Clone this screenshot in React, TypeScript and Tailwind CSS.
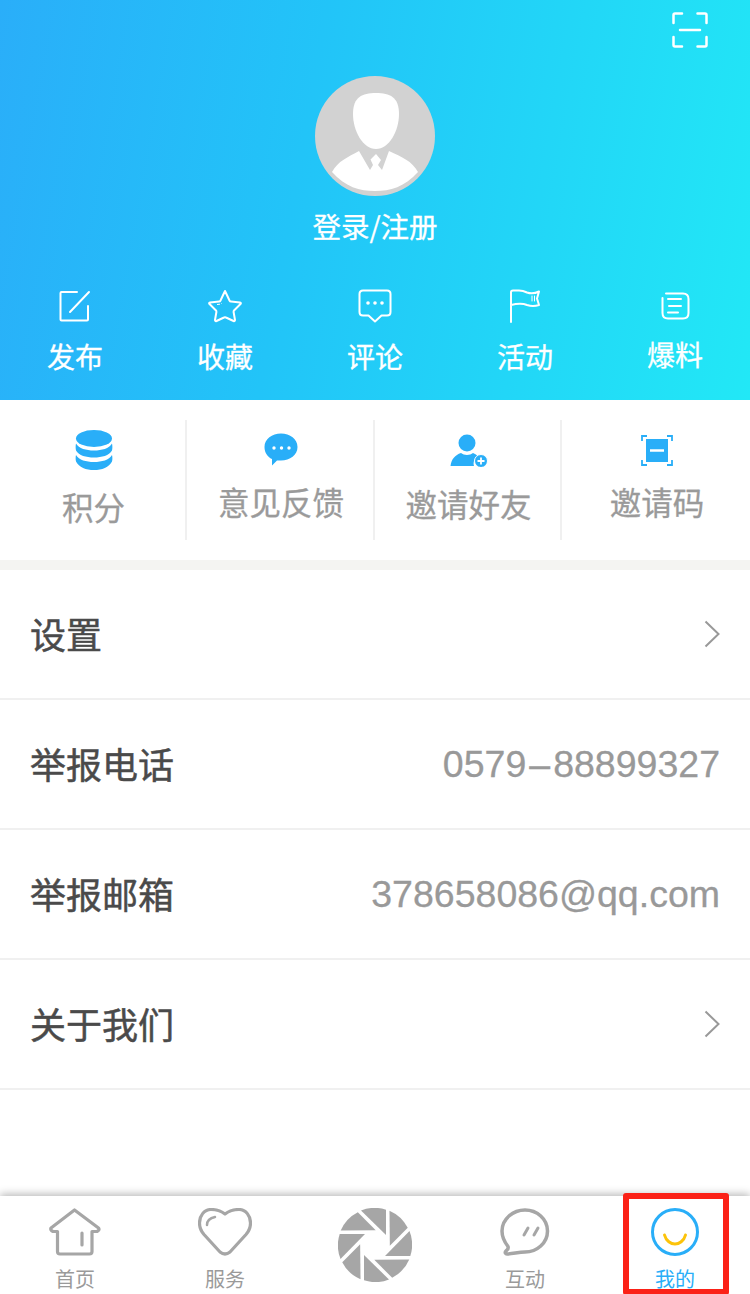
import type { ReactNode } from "react";

const cjk = { fontFamily: '"Noto Sans CJK SC", "Liberation Sans", sans-serif' };

function IconEdit() {
  return (
    <svg width="34" height="34" viewBox="0 0 34 34" fill="none" stroke="#fff" strokeWidth="2" strokeLinecap="round" strokeLinejoin="round">
      <path d="M19 3H3.500A1 1 0 0 0 2.500 4V30.500A1 1 0 0 0 3.500 31.500H29A1 1 0 0 0 30 30.500V17" />
      <path d="M12 23L31 3" />
    </svg>
  );
}
function IconStar() {
  return (
    <svg width="36" height="34" viewBox="0 0 36 34" fill="none" stroke="#fff" strokeWidth="2" strokeLinejoin="round">
      <path d="M18 2L22.500 11.500Q23 12.500 24 12.600L33 13.500Q34.500 13.800 33.500 15L27 21.500Q26.500 22 26.600 23L28 31Q28 32.500 26.500 32L19 28.500Q18 28 17 28.500L9.500 32Q8 32.500 8 31L9.400 23Q9.500 22 9 21.500L2.500 15Q1.500 13.800 3 13.500L12 12.600Q13 12.500 13.500 11.500Z" />
      <path d="M10 15.500L13 15.200M14.500 14.500L15 14" strokeWidth="1" />
    </svg>
  );
}
function IconComment() {
  return (
    <svg width="34" height="34" viewBox="0 0 34 34" fill="none" stroke="#fff" strokeWidth="2" strokeLinejoin="round">
      <path d="M5 1.500H29Q32.500 1.500 32.500 5V23Q32.500 26.500 29 26.500H23.500L17 32.500L10.500 26.500H5Q1.500 26.500 1.500 23V5Q1.500 1.500 5 1.500Z" />
      <circle cx="10" cy="14" r="1.800" fill="#fff" stroke="none" />
      <circle cx="17" cy="14" r="1.800" fill="#fff" stroke="none" />
      <circle cx="24" cy="14" r="1.800" fill="#fff" stroke="none" />
    </svg>
  );
}
function IconFlag() {
  return (
    <svg width="32" height="34" viewBox="0 0 32 34" fill="none" stroke="#fff" strokeWidth="2" strokeLinejoin="round" strokeLinecap="round">
      <path d="M2 33V3Q2 1.500 4 1.500H10Q14 1.500 18 3.500Q24 5.500 30 2.500L28 9.500L30 16Q24 18 18 16Q12 13.500 2 16" />
      <path d="M23 7V12M25.500 7V12" strokeWidth="1" />
    </svg>
  );
}
function IconNote() {
  return (
    <svg width="30" height="30" viewBox="0 0 30 30" fill="none" stroke="#fff" strokeWidth="2" strokeLinecap="round">
      <path d="M6 2.500H23Q28.500 2.500 28.500 8V22Q28.500 27.500 23 27.500H8Q2.500 27.500 2.500 22V7" />
      <path d="M8 8H21M9 15H21M8 21.500H18" />
    </svg>
  );
}
function IconScan() {
  return (
    <svg width="36" height="36" viewBox="0 0 36 36" fill="none" stroke="#fff" strokeWidth="2.500" strokeLinecap="round" strokeLinejoin="round">
      <path d="M1.500 11V3Q1.500 1.500 3 1.500H10" />
      <path d="M25.500 1.500H33Q34.500 1.500 34.500 3V11" />
      <path d="M1.500 25V33Q1.500 34.500 3 34.500H10" />
      <path d="M25.500 34.500H33Q34.500 34.500 34.500 33V25" />
      <path d="M8 18H28" />
    </svg>
  );
}
function Avatar() {
  return (
    <svg width="120" height="120" viewBox="0 0 120 120">
      <circle cx="60" cy="60" r="60" fill="#d2d2d2" />
      <path d="M61 17C47 17 38 21 38 38C38 55 48 73 61 73C74 73 84 55 84 38C84 21 75 17 61 17Z" fill="#fff" />
      <path d="M17 96C23 85 33 81 44 75L55 94L58 89L55.500 83.500L61 78L66 84L63 89L67 94L74 75C87 81 97 85 103 96C90 111 75 115 60 115C45 115 30 111 17 96Z" fill="#fff" />
    </svg>
  );
}
function IconDb() {
  return (
    <svg width="38" height="40" viewBox="0 0 38 40" fill="#29aef8">
      <ellipse cx="19" cy="8.500" rx="18" ry="8.500" />
      <path d="M1 13.500C4 18.500 11 20.500 19 20.500S34 18.500 37 13.500C37.500 15.500 37.500 18.500 37 20.500C34 25.500 27 27.500 19 27.500S4 25.500 1 20.500C0.500 18.500 0.500 15.500 1 13.500Z" />
      <path d="M1 25C4 30 11 32 19 32S34 30 37 25C37.500 27 37.500 29.500 37 31.500C34 37.500 27 40 19 40S4 37.500 1 31.500C0.500 29.500 0.500 27 1 25Z" />
    </svg>
  );
}
function IconBubble() {
  return (
    <svg width="34" height="33" viewBox="0 0 34 33" fill="#29aef8">
      <path d="M17 0.500C26 0.500 33.500 6 33.500 14C33.500 22 26 27.500 17 27.500H13L8 32.500L8 26C3.500 24 0.500 19.500 0.500 14C0.500 6 8 0.500 17 0.500Z" />
      <circle cx="10" cy="15" r="1.700" fill="#fff" />
      <circle cx="17.500" cy="15" r="1.700" fill="#fff" />
      <circle cx="25" cy="15" r="1.700" fill="#fff" />
    </svg>
  );
}
function IconInvite() {
  return (
    <svg width="38" height="33" viewBox="0 0 38 33">
      <ellipse cx="17" cy="9" rx="8.500" ry="8.500" fill="#29aef8" />
      <path d="M0.500 32C1.500 25 5 21 11 19C14 21.500 20 21.500 23 19C25 20 27 21 28 22.500C24 24 23 29 24 32Z" fill="#29aef8" />
      <circle cx="31" cy="27" r="6.500" fill="#29aef8" stroke="#fff" strokeWidth="1" />
      <path d="M27.500 27H34.500M31 23.500V30.500" stroke="#fff" strokeWidth="1.800" />
    </svg>
  );
}
function IconCode() {
  return (
    <svg width="32" height="31" viewBox="0 0 32 31" fill="none">
      <path d="M1 6V1H6M26 1H31V6M1 25V30H6M26 30H31V25" stroke="#29aef8" strokeWidth="1.800" />
      <rect x="5" y="4" width="22" height="23" fill="#29aef8" />
      <path d="M9 15.500H23" stroke="#fff" strokeWidth="2.500" />
    </svg>
  );
}
function IconHome() {
  return (
    <svg width="52" height="48" viewBox="0 0 52 48" fill="none" stroke="#a6a6a6" strokeWidth="3.200" strokeLinejoin="round" strokeLinecap="round">
      <path d="M25.500 2L49.500 20Q51 22 48 23.500H43V43.500Q43 46 40.500 46H11Q8.500 46 8.500 43.500V23.500H4Q1 22 2 20Z" />
      <path d="M33 25V37" />
    </svg>
  );
}
function IconHeart() {
  return (
    <svg width="54" height="48" viewBox="0 0 54 48" fill="none" stroke="#a6a6a6" strokeWidth="3.200" strokeLinejoin="round" strokeLinecap="round">
      <path d="M27 6C23 3 18 1.500 13 1.500C6 1.500 1.500 8 1.500 15C1.500 20 3 23 6 26.500L22 44Q27 48 32 44L48 26.500C51 23 52.500 20 52.500 15C52.500 8 48 1.500 41 1.500C36 1.500 31 3 27 6Z" />
      <path d="M9 17C9 13 12 10 17 9" strokeWidth="2.500" />
    </svg>
  );
}
function IconAperture() {
  const blade = "M-14 -34.500A37 37 0 0 1 11 -35.300L11 -10Z";
  return (
    <svg width="74" height="74" viewBox="-37 -37 74 74" fill="#a6a6a6">
      {[0, 45, 90, 135, 180, 225, 270, 315].map((a) => (
        <path key={a} d={blade} transform={`rotate(${a})`} />
      ))}
    </svg>
  );
}
function IconChat() {
  return (
    <svg width="50" height="48" viewBox="0 0 50 48" fill="none" stroke="#a6a6a6" strokeWidth="3.500" strokeLinejoin="round" strokeLinecap="round">
      <path d="M25 2C37 2 47.500 11 47.500 23C47.500 35 37 44 25 44C19 44 14 45.500 7 46C5.500 46 4.500 44.500 6 43C8 41.500 8.500 40 8 38.500C4.500 34 2 29 2 23C2 11 13 2 25 2Z" />
      <path d="M24 27L28 20M34 27L38 20" strokeWidth="3" />
    </svg>
  );
}
function IconSmile() {
  return (
    <svg width="48" height="48" viewBox="0 0 48 48" fill="none" strokeLinecap="round">
      <circle cx="24" cy="24" r="22.500" stroke="#29aef8" strokeWidth="3" />
      <path d="M13.500 27C15 33 20 36 24 36C28 36 33 33 34.500 27" stroke="#fcc30a" strokeWidth="3" />
    </svg>
  );
}
function Chevron() {
  return (
    <svg width="16" height="28" viewBox="0 0 16 28" fill="none" stroke="#999" strokeWidth="2">
      <path d="M1.500 1.500L14.500 14L1.500 26.500" />
    </svg>
  );
}

const topItems = [
  { label: "发布", icon: <IconEdit />, box: "h-[52px]" },
  { label: "收藏", icon: <IconStar />, box: "h-[52px]" },
  { label: "评论", icon: <IconComment />, box: "h-[52px]" },
  { label: "活动", icon: <IconFlag />, box: "h-[52px]" },
  { label: "爆料", icon: <IconNote />, box: "h-[50px] pt-[2px]" },
];

function ListRow({ label, value, arrow }: { label: string; value?: ReactNode; arrow?: boolean }) {
  return (
    <div className="h-[130px] flex items-center justify-between pl-[30px] pr-[30px] border-b-2 border-[#f0f0f0]">
      <span className="pb-[2px] text-[36px] leading-none font-normal text-[#4a4a4a] [-webkit-text-stroke:0.5px_#4a4a4a]" style={cjk}>{label}</span>
      {value && <span className="pt-[2px] text-[37.500px] leading-none text-[#999] font-['Liberation_Sans'] [-webkit-text-stroke:0.3px_#999]">{value}</span>}
      {arrow && <span className="flex"><Chevron /></span>}
    </div>
  );
}

export default function App() {
  return (
    <div className="relative w-[750px] h-[1294px] flex flex-col bg-white overflow-hidden" style={cjk}>
      <header className="h-[400px] shrink-0 flex flex-col items-center bg-[linear-gradient(100deg,#2aaef9_0%,#22c4f8_40%,#22e8f6_100%)] text-white">
        <div className="self-stretch flex justify-end pt-[12px] pr-[42px]"><IconScan /></div>
        <div className="mt-[28px] flex"><Avatar /></div>
        <div className="mt-[11px] text-[28.500px] leading-[38px] [-webkit-text-stroke:0.3px_#fff]">登录/注册</div>
        <div className="mt-[44px] w-full grid grid-cols-5">
          {topItems.map((t) => (
            <div key={t.label} className="flex flex-col items-center">
              <div className={`${t.box} flex items-start justify-center`}>{t.icon}</div>
              <div className="text-[28px] leading-[30px] [-webkit-text-stroke:0.3px_#fff]">{t.label}</div>
            </div>
          ))}
        </div>
      </header>

      <section className="h-[160px] shrink-0 flex pt-[20px]">
        <StatCell width="w-[187px]" icon={<IconDb />} label="积分" iconTop="pt-[10px]" gap="mt-[18px]" />
        <StatCell width="w-[188px]" icon={<IconBubble />} label="意见反馈" iconTop="pt-[13px]" gap="mt-[17px]" />
        <StatCell width="w-[187px]" icon={<IconInvite />} label="邀请好友" iconTop="pt-[14px]" gap="mt-[18px]" />
        <StatCell width="w-[188px]" icon={<IconCode />} label="邀请码" iconTop="pt-[15px]" gap="mt-[17px]" last />
      </section>
      <div className="h-[10px] shrink-0 bg-[#f4f4f2]" />

      <ListRow label="设置" arrow />
      <ListRow label="举报电话" value={<>0579<span className="mx-[3px]">–</span>88899327</>} />
      <ListRow label="举报邮箱" value="378658086@qq.com" />
      <ListRow label="关于我们" arrow />

      <div className="flex-1" />

      <nav className="h-[98px] shrink-0 grid grid-cols-5 bg-white shadow-[0_-2px_8px_rgba(0,0,0,0.28)]">
        <NavItem icon={<IconHome />} label="首页" />
        <NavItem icon={<IconHeart />} label="服务" />
        <div className="flex justify-center pt-[12px]"><IconAperture /></div>
        <NavItem icon={<IconChat />} label="互动" />
        <NavItem icon={<IconSmile />} label="我的" active />
      </nav>

      <div className="absolute left-[623px] top-[1193px] w-[106px] h-[102px] border-[6px] border-[#fb2117] rounded-[3px]" />
    </div>
  );
}

function StatCell({ width, icon, label, iconTop, gap, last }: { width: string; icon: ReactNode; label: string; iconTop: string; gap: string; last?: boolean }) {
  return (
    <div className={`${width} h-[120px] flex flex-col items-center pl-[2px] ${iconTop} ${last ? "" : "border-r-2 border-[#f0f0f0]"}`}>
      <div className="flex">{icon}</div>
      <div className={`${gap} text-[31.500px] leading-[36px] text-[#9a9a9a] [-webkit-text-stroke:0.3px_#9a9a9a]`}>{label}</div>
    </div>
  );
}

function NavItem({ icon, label, active }: { icon: ReactNode; label: string; active?: boolean }) {
  return (
    <div className="flex flex-col items-center pt-[12px]">
      <div className="h-[48px] flex items-center">{icon}</div>
      <div className={`mt-[11px] text-[20px] leading-[24px] ${active ? "text-[#29aef8]" : "text-[#9a9a9a]"}`}>{label}</div>
    </div>
  );
}
